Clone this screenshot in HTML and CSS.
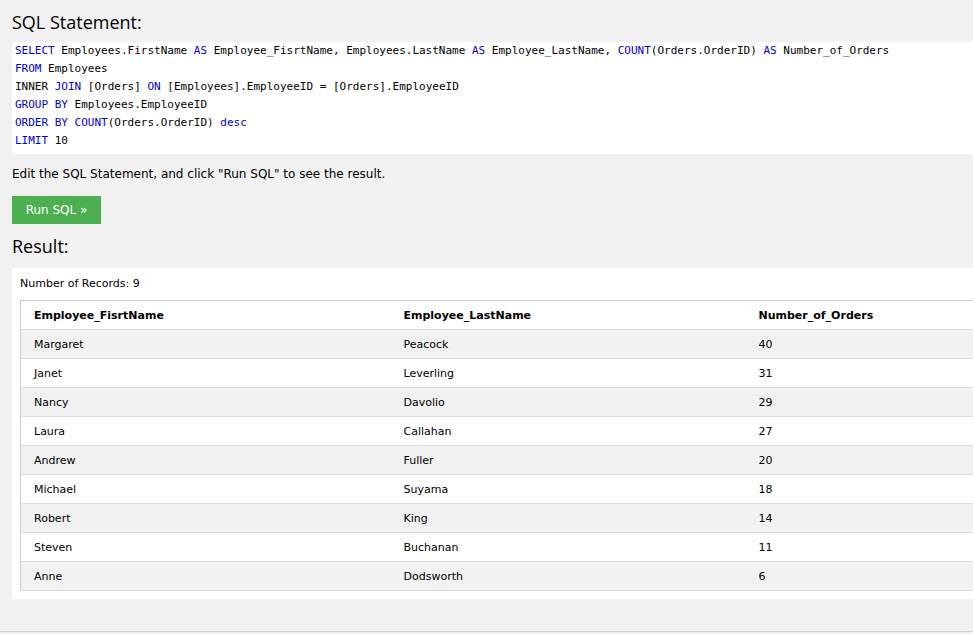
FILE: index.html
```html
<!DOCTYPE html>
<html>
<head>
<meta charset="utf-8">
<link rel="stylesheet" href="styles.css">
</head>
<body>
<div class="page">
  <h3 class="title">SQL Statement:</h3>
  <div class="code">
    <div class="ln"><span class="kw">SELECT</span> Employees.FirstName <span class="kw">AS</span> Employee_FisrtName, Employees.LastName <span class="kw">AS</span> Employee_LastName, <span class="kw">COUNT</span>(Orders.OrderID) <span class="kw">AS</span> Number_of_Orders</div>
    <div class="ln"><span class="kw">FROM</span> Employees</div>
    <div class="ln">INNER <span class="kw">JOIN</span> [Orders] <span class="kw">ON</span> [Employees].EmployeeID = [Orders].EmployeeID</div>
    <div class="ln"><span class="kw">GROUP BY</span> Employees.EmployeeID</div>
    <div class="ln"><span class="kw">ORDER BY</span> <span class="kw">COUNT</span>(Orders.OrderID) <span class="kw">desc</span></div>
    <div class="ln"><span class="kw">LIMIT</span> 10</div>
  </div>
  <p class="hint">Edit the SQL Statement, and click "Run SQL" to see the result.</p>
  <button class="run">Run SQL »</button>
  <h3 class="title result-title">Result:</h3>
  <div class="result">
    <div class="count">Number of Records: 9</div>
    <table class="grid">
      <tr><th class="c1">Employee_FisrtName</th><th class="c2">Employee_LastName</th><th class="c3">Number_of_Orders</th></tr>
      <tr><td>Margaret</td><td>Peacock</td><td>40</td></tr>
      <tr><td>Janet</td><td>Leverling</td><td>31</td></tr>
      <tr><td>Nancy</td><td>Davolio</td><td>29</td></tr>
      <tr><td>Laura</td><td>Callahan</td><td>27</td></tr>
      <tr><td>Andrew</td><td>Fuller</td><td>20</td></tr>
      <tr><td>Michael</td><td>Suyama</td><td>18</td></tr>
      <tr><td>Robert</td><td>King</td><td>14</td></tr>
      <tr><td>Steven</td><td>Buchanan</td><td>11</td></tr>
      <tr><td>Anne</td><td>Dodsworth</td><td>6</td></tr>
    </table>
  </div>
  <div class="footer"></div>
</div>
</body>
</html>
```

FILE: styles.css
```css
html, body {
  margin: 0;
  padding: 0;
  background: #f1f1f1;
  overflow: hidden;
}
.page {
  width: 973px;
  height: 634px;
  overflow: hidden;
  padding-left: 12px;
  box-sizing: border-box;
  font-family: "DejaVu Sans", Verdana, sans-serif;
  color: #000;
}
.title {
  margin: 0;
  padding-top: 10px;
  height: 42px;
  box-sizing: border-box;
  font-family: "Open Sans", "Segoe UI", sans-serif;
  font-weight: 400;
  font-size: 18px;
  line-height: 24px;
}
.code {
  background: #fff;
  height: 112px;
  box-sizing: border-box;
  padding: 0 0 0 3px;
  font-family: "DejaVu Sans Mono", Consolas, monospace;
  font-size: 11px;
  line-height: 18px;
}
.ln { white-space: pre; height: 18px; }
.kw { color: #0000cd; }
.hint {
  margin: 0;
  height: 42px;
  padding-top: 12px;
  box-sizing: border-box;
  font-size: 12px;
  line-height: 17px;
}
.run {
  display: block;
  margin: 0;
  border: none;
  background: #4caf50;
  color: #fff;
  width: 89px;
  height: 28px;
  font-family: "DejaVu Sans", Verdana, sans-serif;
  font-size: 12px;
  padding: 0;
}
.result-title {
  padding-top: 10px;
  height: 44px;
}
.result {
  background: #fff;
  height: 331px;
  box-sizing: border-box;
  padding: 8px 0 0 8px;
}
.count {
  font-size: 11px;
  line-height: 16px;
  height: 24px;
}
.grid {
  border-collapse: collapse;
  border: 1px solid #ccc;
  width: 1100px;
  font-size: 11px;
}
.grid th, .grid td {
  height: 29px;
  padding: 0 0 0 13px;
  text-align: left;
  border-bottom: 1px solid #ddd;
  box-sizing: border-box;
}
.grid th { font-weight: bold; background: #fff; }
.grid .c1 { width: 370px; }
.grid .c2 { width: 355px; }
.grid tr:nth-child(even) td { background: #f1f1f1; }
.grid tr:nth-child(odd) td { background: #fff; }
.footer {
  margin-top: 32px;
  margin-left: -12px;
  border-top: 1px solid #ccc;
  height: 10px;
  background: #f1f1f1;
}
```
